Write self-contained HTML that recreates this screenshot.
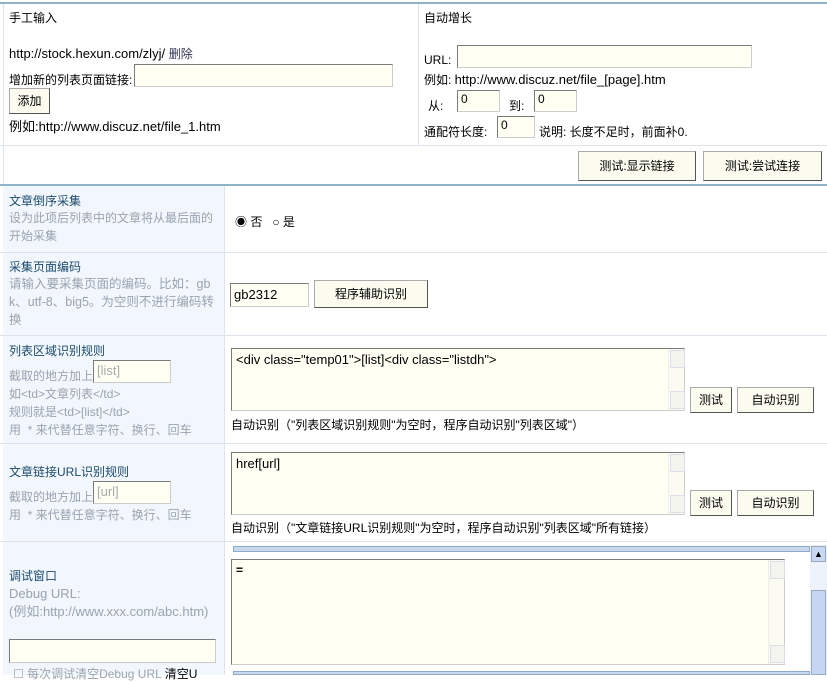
<!DOCTYPE html><html><head><meta charset="utf-8"><style>
*{margin:0;padding:0;box-sizing:border-box}
body{width:827px;height:675px;overflow:hidden;background:#fff;font-family:"Liberation Sans","Noto Sans CJK SC",sans-serif;font-size:12px;color:#000;position:relative}
.a{position:absolute;white-space:nowrap}
.in{position:absolute;background:#fffff4;border:1px solid #ccc;border-top-color:#7a7a7a;border-left-color:#7a7a7a}
.bt{position:absolute;background:#fbfbf0;border:1px solid #aaa;border-right-color:#555;border-bottom-color:#555;text-align:center;font-size:12px}
.t{color:#1b4a6b;font-size:12px}
.g{color:#9aa3b0;font-size:12px;line-height:18px}
.hl{position:absolute;left:0;width:827px;height:1px;background:#dde3ea}
.sb{position:absolute;width:16px;background:#fbfbf2;border-left:1px solid #eee}
.sb:before,.sb:after{content:"";position:absolute;left:1px;width:13px;height:16px;border:1px solid #dde;background:#f4f4ee}
.sb:before{top:1px}.sb:after{bottom:1px}
</style></head><body>
<div class="a" style="left:0;top:2px;width:827px;height:2px;background:#8fb3c9"></div>
<div class="a" style="left:418px;top:4px;width:1px;height:141px;background:#dde3ea"></div>
<div class="a" style="left:3px;top:4px;width:1px;height:180px;background:#dde3ea"></div>
<div class="a" style="left:9px;top:9px">手工输入</div>
<div class="a" style="left:9px;top:45px;font-size:13px">http://stock.hexun.com/zlyj/ <span style="color:#335;font-size:12px">删除</span></div>
<div class="a" style="left:9px;top:71px">增加新的列表页面链接:</div>
<div class="in" style="left:134px;top:64px;width:259px;height:23px"></div>
<div class="bt" style="left:9px;top:88px;width:41px;height:26px;line-height:24px">添加</div>
<div class="a" style="left:9px;top:116px;font-size:13px">例如:http://www.discuz.net/file_1.htm</div>
<div class="a" style="left:424px;top:9px">自动增长</div>
<div class="a" style="left:424px;top:53px">URL:</div>
<div class="in" style="left:457px;top:45px;width:295px;height:23px"></div>
<div class="a" style="left:424px;top:71px">例如: <span style="font-size:13px">http://www.discuz.net/file_[page].htm</span></div>
<div class="a" style="left:428px;top:97px">从:</div>
<div class="in" style="left:457px;top:90px;width:43px;height:22px;padding:1px 3px">0</div>
<div class="a" style="left:509px;top:97px">到:</div>
<div class="in" style="left:534px;top:90px;width:43px;height:22px;padding:1px 3px">0</div>
<div class="a" style="left:424px;top:123px">通配符长度:</div>
<div class="in" style="left:497px;top:116px;width:38px;height:22px;padding:1px 3px">0</div>
<div class="a" style="left:539px;top:123px">说明: 长度不足时，前面补0.</div>
<div class="hl" style="top:145px"></div>
<div class="bt" style="left:578px;top:151px;width:118px;height:30px;line-height:28px">测试:显示链接</div>
<div class="bt" style="left:703px;top:151px;width:119px;height:30px;line-height:28px">测试:尝试连接</div>
<div class="a" style="left:0;top:184px;width:827px;height:2px;background:#8fb3c9"></div>
<div class="a" style="left:3px;top:186px;width:221px;height:489px;background:#f2f7fd"></div>
<div class="a" style="left:224px;top:186px;width:1px;height:489px;background:#dde3ea"></div>
<div class="a t" style="left:9px;top:192px">文章倒序采集</div>
<div class="a g" style="left:9px;top:209px;white-space:normal;width:210px">设为此项后列表中的文章将从最后面的开始采集</div>
<div class="a" style="left:235px;top:213px">◉ 否 &nbsp;&nbsp;○ 是</div>
<div class="hl" style="top:252px"></div>
<div class="a t" style="left:9px;top:258px">采集页面编码</div>
<div class="a g" style="left:9px;top:275px;white-space:normal;width:208px;word-break:break-all;font-size:12.5px">请输入要采集页面的编码。比如：gbk、utf-8、big5。为空则不进行编码转换</div>
<div class="in" style="left:230px;top:283px;width:79px;height:24px;padding:3px 3px;font-size:13px">gb2312</div>
<div class="bt" style="left:314px;top:280px;width:114px;height:28px;line-height:26px">程序辅助识别</div>
<div class="hl" style="top:335px"></div>
<div class="a t" style="left:9px;top:342px">列表区域识别规则</div>
<div class="a g" style="left:9px;top:367px">截取的地方加上</div>
<div class="in" style="left:93px;top:360px;width:78px;height:23px;color:#aaa;padding:2px 3px;font-size:13px">[list]</div>
<div class="a g" style="left:9px;top:385px">如&lt;td&gt;文章列表&lt;/td&gt;<br>规则就是&lt;td&gt;[list]&lt;/td&gt;<br>用 &nbsp;* 来代替任意字符、换行、回车</div>
<div class="in" style="left:231px;top:348px;width:454px;height:63px;padding:3px 4px;font-size:13px">&lt;div class="temp01"&gt;[list]&lt;div class="listdh"&gt;</div>
<div class="sb" style="left:668px;top:349px;height:61px"></div>
<div class="bt" style="left:690px;top:387px;width:42px;height:26px;line-height:24px">测试</div>
<div class="bt" style="left:737px;top:387px;width:77px;height:26px;line-height:24px">自动识别</div>
<div class="a" style="left:231px;top:416px">自动识别（"列表区域识别规则"为空时，程序自动识别"列表区域"）</div>
<div class="hl" style="top:443px"></div>
<div class="a t" style="left:9px;top:463px">文章链接URL识别规则</div>
<div class="a g" style="left:9px;top:488px">截取的地方加上</div>
<div class="in" style="left:93px;top:481px;width:78px;height:23px;color:#aaa;padding:2px 3px;font-size:13px">[url]</div>
<div class="a g" style="left:9px;top:506px">用 &nbsp;* 来代替任意字符、换行、回车</div>
<div class="in" style="left:231px;top:452px;width:454px;height:63px;padding:3px 4px;font-size:13px">href[url]</div>
<div class="sb" style="left:668px;top:453px;height:61px"></div>
<div class="bt" style="left:690px;top:490px;width:42px;height:26px;line-height:24px">测试</div>
<div class="bt" style="left:737px;top:490px;width:77px;height:26px;line-height:24px">自动识别</div>
<div class="a" style="left:231px;top:519px">自动识别（"文章链接URL识别规则"为空时，程序自动识别"列表区域"所有链接）</div>
<div class="hl" style="top:541px"></div>
<div class="a t" style="left:9px;top:567px">调试窗口</div>
<div class="a g" style="left:9px;top:585px;white-space:normal;width:206px;word-break:break-all;font-size:13px">Debug URL:<br>(例如:http://www.xxx.com/abc.htm)</div>
<div class="in" style="left:9px;top:639px;width:207px;height:24px"></div>
<div class="a g" style="left:13px;top:665px">☐ 每次调试清空Debug URL <span style="color:#000">清空U</span></div>
<div class="a" style="left:233px;top:546px;width:577px;height:6px;background:#c9d9ee;border:1px solid #8fa9c8"></div>
<div class="in" style="left:231px;top:559px;width:554px;height:106px;padding:3px 4px;font-weight:bold">=</div>
<div class="sb" style="left:768px;top:560px;height:104px"></div>
<div class="a" style="left:233px;top:671px;width:577px;height:4px;background:#c9d9ee;border:1px solid #8fa9c8"></div>
<div class="a" style="left:810px;top:545px;width:17px;height:130px;background:#eef3fb"></div>
<div class="a" style="left:811px;top:546px;width:15px;height:16px;background:#c8d8f2;border:1px solid #9ab;font-size:9px;text-align:center;line-height:14px">▲</div>
<div class="a" style="left:811px;top:590px;width:15px;height:85px;background:#c4d6f4;border:1px solid #9ab"></div>
</body></html>
